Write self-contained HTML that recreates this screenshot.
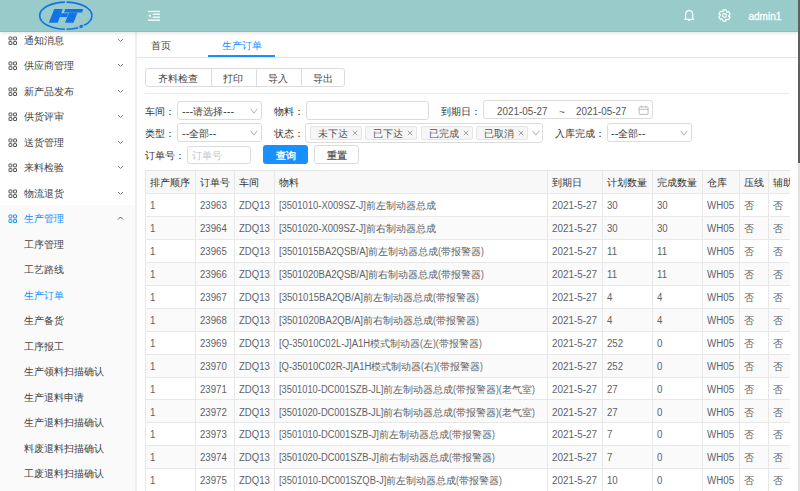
<!DOCTYPE html>
<html><head><meta charset="utf-8"><style>
html,body{margin:0;padding:0;}
body{width:800px;height:491px;overflow:hidden;position:relative;background:#fff;font-family:"Liberation Sans",sans-serif;font-size:10px;}
.b{position:absolute;}
.t{position:absolute;white-space:nowrap;line-height:20px;height:20px;font-size:10px;}
.s{display:inline-block;transform-origin:0 50%}
</style></head><body>
<div class="b" style="left:0px;top:0px;width:798px;height:32px;background:rgb(152,203,202);box-shadow:0 1px 4px rgba(90,60,90,.16);z-index:5"></div>
<div class="b" style="left:0px;top:31px;width:798px;height:1px;background:rgb(138,192,191);z-index:5"></div>
<svg class="b" style="left:0;top:0;z-index:6" width="140" height="32" viewBox="0 0 140 32">
<ellipse cx="65.8" cy="15.7" rx="26.1" ry="13.6" fill="none" stroke="#1173e6" stroke-width="1.6"/>
<g fill="rgb(152,203,202)">
<rect x="64.9" y="0" width="1.6" height="4"/>
<rect x="64.9" y="27.5" width="1.6" height="4"/>
<circle cx="78.9" cy="27.6" r="1"/>
<circle cx="83.5" cy="25.8" r="1"/>
</g>
<circle cx="81.2" cy="26.4" r="1.6" fill="#1173e6"/>
<g fill="#1173e6">
<polygon points="54.25,9 62.75,9 57.75,22.75 48.75,22.75"/>
<polygon points="61.1,13.3 68.3,13.3 67,16.9 59.8,16.9"/>
<polygon points="65.25,9 83.25,9 82,12.5 64,12.5"/>
<polygon points="69,12.5 77.5,12.5 73.5,22.75 65,22.75"/>
</g>
</svg>
<svg class="b" style="left:146px;top:8px;z-index:6" width="16" height="16" viewBox="0 0 16 16">
<g fill="#fff">
<rect x="2" y="2.8" width="12" height="1.3"/>
<rect x="6.6" y="5.6" width="7.4" height="1.2"/>
<rect x="6.6" y="8.6" width="7.4" height="1.2"/>
<rect x="2" y="11.5" width="12" height="1.3"/>
<polygon points="2.4,7.8 4.7,6 4.7,9.6"/>
</g></svg>
<svg class="b" style="left:683px;top:8px;z-index:6" width="13" height="15" viewBox="0 0 13 15">
<path d="M1.7 11.4 L2.7 10.4 V6.2 C2.7 4 4.2 2.7 6.2 2.7 C8.2 2.7 9.7 4 9.7 6.2 V10.4 L10.7 11.4 Z" fill="none" stroke="#fff" stroke-width="1.15" stroke-linejoin="round"/>
<path d="M6.2 1.6 V2.8" stroke="#fff" stroke-width="1.1"/>
<path d="M4.9 12.1 A1.35 1.35 0 0 0 7.5 12.1 Z" fill="#fff"/>
</svg>
<svg class="b" style="left:718.2px;top:8.9px;z-index:6" width="13" height="13" viewBox="0 0 13 13">
<polygon points="4.90,0.92 8.10,0.92 8.65,2.78 9.49,3.41 10.53,2.33 12.13,5.10 10.80,6.50 10.67,7.54 12.13,7.90 10.53,10.67 8.65,10.22 7.69,10.63 8.10,12.08 4.90,12.08 4.35,10.22 3.51,9.59 2.47,10.67 0.87,7.90 2.20,6.50 2.33,5.46 0.87,5.10 2.47,2.33 4.35,2.78 5.31,2.37" fill="none" stroke="#fff" stroke-width="1.1" stroke-linejoin="round"/>
<circle cx="6.5" cy="6.5" r="1.9" fill="none" stroke="#fff" stroke-width="1.1"/>
</svg>
<div class="t" style="left:748.5px;top:7.1px;color:#fff;z-index:6;-webkit-text-stroke:0.3px #fff;">admin1</div>
<div class="b" style="left:798px;top:0px;width:2px;height:163px;background:#5f5f5f;z-index:7"></div>
<div class="b" style="left:798px;top:163px;width:2px;height:328px;background:#e2e2e2;z-index:7"></div>
<div class="b" style="left:0px;top:32px;width:135px;height:459px;background:#fff"></div>
<div class="b" style="left:0px;top:205px;width:135px;height:286px;background:#fafafa"></div>
<div class="b" style="left:135px;top:32px;width:2px;height:459px;background:#f1ecf1"></div>
<svg class="b" style="left:8px;top:35.6px" width="10" height="10" viewBox="0 0 10 10">
<g fill="none" stroke="#555" stroke-width="1">
<rect x="1.0" y="1.0" width="2.9" height="2.9" rx="0.3"/>
<rect x="5.6" y="1.0" width="2.9" height="2.9" rx="0.3"/>
<rect x="1.0" y="5.6" width="2.9" height="2.9" rx="0.3"/>
<rect x="5.6" y="5.6" width="2.9" height="2.9" rx="0.3"/>
</g></svg>
<div class="t" style="left:23.5px;top:30.80px;color:#444;font-size:10px;">通知消息</div>
<svg class="b" style="left:117px;top:37.65px" width="7" height="4.5" viewBox="0 0 7 4.5">
<path d="M1 1 L3.5 3.5 L6 1" fill="none" stroke="#888" stroke-width="1"/></svg>
<svg class="b" style="left:8px;top:61.10000000000001px" width="10" height="10" viewBox="0 0 10 10">
<g fill="none" stroke="#555" stroke-width="1">
<rect x="1.0" y="1.0" width="2.9" height="2.9" rx="0.3"/>
<rect x="5.6" y="1.0" width="2.9" height="2.9" rx="0.3"/>
<rect x="1.0" y="5.6" width="2.9" height="2.9" rx="0.3"/>
<rect x="5.6" y="5.6" width="2.9" height="2.9" rx="0.3"/>
</g></svg>
<div class="t" style="left:23.5px;top:56.30px;color:#444;font-size:10px;">供应商管理</div>
<svg class="b" style="left:117px;top:63.150000000000006px" width="7" height="4.5" viewBox="0 0 7 4.5">
<path d="M1 1 L3.5 3.5 L6 1" fill="none" stroke="#888" stroke-width="1"/></svg>
<svg class="b" style="left:8px;top:86.60000000000001px" width="10" height="10" viewBox="0 0 10 10">
<g fill="none" stroke="#555" stroke-width="1">
<rect x="1.0" y="1.0" width="2.9" height="2.9" rx="0.3"/>
<rect x="5.6" y="1.0" width="2.9" height="2.9" rx="0.3"/>
<rect x="1.0" y="5.6" width="2.9" height="2.9" rx="0.3"/>
<rect x="5.6" y="5.6" width="2.9" height="2.9" rx="0.3"/>
</g></svg>
<div class="t" style="left:23.5px;top:81.80px;color:#444;font-size:10px;">新产品发布</div>
<svg class="b" style="left:117px;top:88.65px" width="7" height="4.5" viewBox="0 0 7 4.5">
<path d="M1 1 L3.5 3.5 L6 1" fill="none" stroke="#888" stroke-width="1"/></svg>
<svg class="b" style="left:8px;top:112.10000000000001px" width="10" height="10" viewBox="0 0 10 10">
<g fill="none" stroke="#555" stroke-width="1">
<rect x="1.0" y="1.0" width="2.9" height="2.9" rx="0.3"/>
<rect x="5.6" y="1.0" width="2.9" height="2.9" rx="0.3"/>
<rect x="1.0" y="5.6" width="2.9" height="2.9" rx="0.3"/>
<rect x="5.6" y="5.6" width="2.9" height="2.9" rx="0.3"/>
</g></svg>
<div class="t" style="left:23.5px;top:107.30px;color:#444;font-size:10px;">供货评审</div>
<svg class="b" style="left:117px;top:114.15px" width="7" height="4.5" viewBox="0 0 7 4.5">
<path d="M1 1 L3.5 3.5 L6 1" fill="none" stroke="#888" stroke-width="1"/></svg>
<svg class="b" style="left:8px;top:137.6px" width="10" height="10" viewBox="0 0 10 10">
<g fill="none" stroke="#555" stroke-width="1">
<rect x="1.0" y="1.0" width="2.9" height="2.9" rx="0.3"/>
<rect x="5.6" y="1.0" width="2.9" height="2.9" rx="0.3"/>
<rect x="1.0" y="5.6" width="2.9" height="2.9" rx="0.3"/>
<rect x="5.6" y="5.6" width="2.9" height="2.9" rx="0.3"/>
</g></svg>
<div class="t" style="left:23.5px;top:132.80px;color:#444;font-size:10px;">送货管理</div>
<svg class="b" style="left:117px;top:139.65px" width="7" height="4.5" viewBox="0 0 7 4.5">
<path d="M1 1 L3.5 3.5 L6 1" fill="none" stroke="#888" stroke-width="1"/></svg>
<svg class="b" style="left:8px;top:163.1px" width="10" height="10" viewBox="0 0 10 10">
<g fill="none" stroke="#555" stroke-width="1">
<rect x="1.0" y="1.0" width="2.9" height="2.9" rx="0.3"/>
<rect x="5.6" y="1.0" width="2.9" height="2.9" rx="0.3"/>
<rect x="1.0" y="5.6" width="2.9" height="2.9" rx="0.3"/>
<rect x="5.6" y="5.6" width="2.9" height="2.9" rx="0.3"/>
</g></svg>
<div class="t" style="left:23.5px;top:158.30px;color:#444;font-size:10px;">来料检验</div>
<svg class="b" style="left:117px;top:165.15px" width="7" height="4.5" viewBox="0 0 7 4.5">
<path d="M1 1 L3.5 3.5 L6 1" fill="none" stroke="#888" stroke-width="1"/></svg>
<svg class="b" style="left:8px;top:188.6px" width="10" height="10" viewBox="0 0 10 10">
<g fill="none" stroke="#555" stroke-width="1">
<rect x="1.0" y="1.0" width="2.9" height="2.9" rx="0.3"/>
<rect x="5.6" y="1.0" width="2.9" height="2.9" rx="0.3"/>
<rect x="1.0" y="5.6" width="2.9" height="2.9" rx="0.3"/>
<rect x="5.6" y="5.6" width="2.9" height="2.9" rx="0.3"/>
</g></svg>
<div class="t" style="left:23.5px;top:183.80px;color:#444;font-size:10px;">物流退货</div>
<svg class="b" style="left:117px;top:190.65px" width="7" height="4.5" viewBox="0 0 7 4.5">
<path d="M1 1 L3.5 3.5 L6 1" fill="none" stroke="#888" stroke-width="1"/></svg>
<svg class="b" style="left:8px;top:214.1px" width="10" height="10" viewBox="0 0 10 10">
<g fill="none" stroke="#1890ff" stroke-width="1">
<rect x="1.0" y="1.0" width="2.9" height="2.9" rx="0.3"/>
<rect x="5.6" y="1.0" width="2.9" height="2.9" rx="0.3"/>
<rect x="1.0" y="5.6" width="2.9" height="2.9" rx="0.3"/>
<rect x="5.6" y="5.6" width="2.9" height="2.9" rx="0.3"/>
</g></svg>
<div class="t" style="left:23.5px;top:209.30px;color:#1890ff;font-size:10px;">生产管理</div>
<svg class="b" style="left:117px;top:216.15px" width="7" height="4.5" viewBox="0 0 7 4.5">
<path d="M1 3.5 L3.5 1 L6 3.5" fill="none" stroke="#555" stroke-width="1"/></svg>
<div class="t" style="left:23.5px;top:234.80px;color:#444;font-size:10px;">工序管理</div>
<div class="t" style="left:23.5px;top:260.30px;color:#444;font-size:10px;">工艺路线</div>
<div class="t" style="left:23.5px;top:285.80px;color:#1890ff;font-size:10px;">生产订单</div>
<div class="t" style="left:23.5px;top:311.30px;color:#444;font-size:10px;">生产备货</div>
<div class="t" style="left:23.5px;top:336.80px;color:#444;font-size:10px;">工序报工</div>
<div class="t" style="left:23.5px;top:362.30px;color:#444;font-size:10px;">生产领料扫描确认</div>
<div class="t" style="left:23.5px;top:387.80px;color:#444;font-size:10px;">生产退料申请</div>
<div class="t" style="left:23.5px;top:413.30px;color:#444;font-size:10px;">生产退料扫描确认</div>
<div class="t" style="left:23.5px;top:438.80px;color:#444;font-size:10px;">料废退料扫描确认</div>
<div class="t" style="left:23.5px;top:464.30px;color:#444;font-size:10px;">工废退料扫描确认</div>
<div class="b" style="left:136px;top:57px;width:662px;height:1px;background:#e4e4e4"></div>
<div class="t" style="left:151px;top:35.50px;color:#444;font-size:10px;">首页</div>
<div class="t" style="left:221.5px;top:35.50px;color:#1890ff;font-size:10px;">生产订单</div>
<div class="b" style="left:207.6px;top:55px;width:67.4px;height:2px;background:#1890ff"></div>
<div class="b" style="left:145px;top:68px;width:200px;height:19.4px;border:1px solid #dcdcdc;border-radius:3px;box-sizing:border-box;background:#fff"></div>
<div class="b" style="left:210.5px;top:68px;width:1px;height:19.4px;background:#dcdcdc"></div>
<div class="b" style="left:255.5px;top:68px;width:1px;height:19.4px;background:#dcdcdc"></div>
<div class="b" style="left:300.5px;top:68px;width:1px;height:19.4px;background:#dcdcdc"></div>
<div class="t" style="left:145.5px;width:65.0px;text-align:center;top:68.50px;color:#444;font-size:10px;">齐料检查</div>
<div class="t" style="left:210.5px;width:45.0px;text-align:center;top:68.50px;color:#444;font-size:10px;">打印</div>
<div class="t" style="left:255.5px;width:45.0px;text-align:center;top:68.50px;color:#444;font-size:10px;">导入</div>
<div class="t" style="left:300.5px;width:44.5px;text-align:center;top:68.50px;color:#444;font-size:10px;">导出</div>
<div class="b" style="left:145px;top:93px;width:644px;height:1px;background:#ebebeb"></div>
<div class="t" style="left:145px;top:101.90px;color:#333;font-size:10px;">车间：</div>
<div class="b" style="left:177px;top:101.2px;width:84.5px;height:19.2px;border:1px solid #dcdcdc;border-radius:3px;box-sizing:border-box;background:#fff"></div>
<div class="t" style="left:182px;top:101.90px;color:#444;font-size:10px;"><span class="s" style="transform:scaleX(1.113);margin-right:1.12px">---</span>请选择<span class="s" style="transform:scaleX(1.113);margin-right:1.12px">---</span></div>
<svg class="b" style="left:249.5px;top:107.8px" width="8" height="6" viewBox="0 0 8 6">
<path d="M0.6 0.8 L3.9 5.2 L7.2 0.8" fill="none" stroke="#aeaeae" stroke-width="0.95"/></svg>
<div class="t" style="left:273.5px;top:101.90px;color:#333;font-size:10px;">物料：</div>
<div class="b" style="left:305.5px;top:101.2px;width:123.5px;height:19.2px;border:1px solid #dcdcdc;border-radius:3px;box-sizing:border-box;background:#fff"></div>
<div class="t" style="left:440.7px;top:101.90px;color:#333;font-size:10px;">到期日：</div>
<div class="b" style="left:482.5px;top:100.3px;width:170px;height:19.2px;border:1px solid #dcdcdc;border-radius:3px;box-sizing:border-box;background:#fff"></div>
<div class="t" style="left:497px;top:101.90px;color:#555;font-size:10px;"><span class="s" style="transform:scaleX(0.985);margin-right:-0.79px">2021-05-27</span></div>
<div class="t" style="left:559.3px;top:103.10px;color:#666;font-size:10px;"><span class="s" style="transform:scaleX(1.025);margin-right:0.15px">~</span></div>
<div class="t" style="left:575.6px;top:101.90px;color:#555;font-size:10px;"><span class="s" style="transform:scaleX(0.985);margin-right:-0.79px">2021-05-27</span></div>
<svg class="b" style="left:637.5px;top:105px" width="11" height="11" viewBox="0 0 11 11">
<g fill="none" stroke="#b4b4b4" stroke-width="0.9">
<rect x="1.1" y="1.8" width="9" height="7.6" rx="0.8"/>
<path d="M1.1 4.3 H10.1 M3.4 0.7 V2.6 M7.8 0.7 V2.6"/>
</g></svg>
<div class="t" style="left:145px;top:124.00px;color:#333;font-size:10px;">类型：</div>
<div class="b" style="left:177px;top:123.1px;width:84.5px;height:18.9px;border:1px solid #dcdcdc;border-radius:3px;box-sizing:border-box;background:#fff"></div>
<div class="t" style="left:182px;top:124.00px;color:#444;font-size:10px;"><span class="s" style="transform:scaleX(1.113);margin-right:0.75px">--</span>全部<span class="s" style="transform:scaleX(1.113);margin-right:0.75px">--</span></div>
<svg class="b" style="left:249.5px;top:129.9px" width="8" height="6" viewBox="0 0 8 6">
<path d="M0.6 0.8 L3.9 5.2 L7.2 0.8" fill="none" stroke="#aeaeae" stroke-width="0.95"/></svg>
<div class="t" style="left:273.5px;top:124.00px;color:#333;font-size:10px;">状态：</div>
<div class="b" style="left:305.3px;top:123.2px;width:238.2px;height:19.9px;border:1px solid #dcdcdc;border-radius:3px;box-sizing:border-box;background:#fff"></div>
<div class="b" style="left:309.8px;top:125.5px;width:52.2px;height:14.2px;background:#f6f6f6;border:1px solid #e6e6e6;border-radius:2px;box-sizing:border-box"></div>
<div class="t" style="left:317.8px;top:124.00px;color:#555;font-size:10px;">未下达</div>
<svg class="b" style="left:351.8px;top:129.6px" width="6" height="6" viewBox="0 0 6 6">
<path d="M0.7 0.7 L5.3 5.3 M5.3 0.7 L0.7 5.3" stroke="#8f8f8f" stroke-width="0.8"/></svg>
<div class="b" style="left:365.3px;top:125.5px;width:52.2px;height:14.2px;background:#f6f6f6;border:1px solid #e6e6e6;border-radius:2px;box-sizing:border-box"></div>
<div class="t" style="left:373.3px;top:124.00px;color:#555;font-size:10px;">已下达</div>
<svg class="b" style="left:407.3px;top:129.6px" width="6" height="6" viewBox="0 0 6 6">
<path d="M0.7 0.7 L5.3 5.3 M5.3 0.7 L0.7 5.3" stroke="#8f8f8f" stroke-width="0.8"/></svg>
<div class="b" style="left:421px;top:125.5px;width:52px;height:14.2px;background:#f6f6f6;border:1px solid #e6e6e6;border-radius:2px;box-sizing:border-box"></div>
<div class="t" style="left:429px;top:124.00px;color:#555;font-size:10px;">已完成</div>
<svg class="b" style="left:462.8px;top:129.6px" width="6" height="6" viewBox="0 0 6 6">
<path d="M0.7 0.7 L5.3 5.3 M5.3 0.7 L0.7 5.3" stroke="#8f8f8f" stroke-width="0.8"/></svg>
<div class="b" style="left:476.4px;top:125.5px;width:51.7px;height:14.2px;background:#f6f6f6;border:1px solid #e6e6e6;border-radius:2px;box-sizing:border-box"></div>
<div class="t" style="left:484.4px;top:124.00px;color:#555;font-size:10px;">已取消</div>
<svg class="b" style="left:517.9px;top:129.6px" width="6" height="6" viewBox="0 0 6 6">
<path d="M0.7 0.7 L5.3 5.3 M5.3 0.7 L0.7 5.3" stroke="#8f8f8f" stroke-width="0.8"/></svg>
<svg class="b" style="left:532px;top:129.9px" width="8" height="6" viewBox="0 0 8 6">
<path d="M0.6 0.8 L3.9 5.2 L7.2 0.8" fill="none" stroke="#aeaeae" stroke-width="0.95"/></svg>
<div class="t" style="left:555px;top:124.00px;color:#333;font-size:10px;">入库完成：</div>
<div class="b" style="left:606.6px;top:123.4px;width:85px;height:19px;border:1px solid #dcdcdc;border-radius:3px;box-sizing:border-box;background:#fff"></div>
<div class="t" style="left:611px;top:124.00px;color:#444;font-size:10px;"><span class="s" style="transform:scaleX(1.113);margin-right:0.75px">--</span>全部<span class="s" style="transform:scaleX(1.113);margin-right:0.75px">--</span></div>
<svg class="b" style="left:679.5px;top:129.9px" width="8" height="6" viewBox="0 0 8 6">
<path d="M0.6 0.8 L3.9 5.2 L7.2 0.8" fill="none" stroke="#aeaeae" stroke-width="0.95"/></svg>
<div class="t" style="left:145px;top:145.90px;color:#333;font-size:10px;">订单号：</div>
<div class="b" style="left:187.4px;top:145.6px;width:63.8px;height:18.8px;border:1px solid #dcdcdc;border-radius:3px;box-sizing:border-box;background:#fff"></div>
<div class="t" style="left:191.5px;top:145.90px;color:#c0c4cc;font-size:10px;">订单号</div>
<div class="b" style="left:263px;top:145.3px;width:45px;height:19.2px;background:#1890ff;border-radius:3px"></div>
<div class="t" style="left:263.0px;width:45px;text-align:center;top:145.90px;color:#fff;font-size:10px;font-weight:bold;">查询</div>
<div class="b" style="left:314.3px;top:145.3px;width:45px;height:19.2px;border:1px solid #dcdcdc;border-radius:3px;box-sizing:border-box;background:#fff"></div>
<div class="t" style="left:314.3px;width:45px;text-align:center;top:145.90px;color:#444;font-size:10px;-webkit-text-stroke:0.2px #444;">重置</div>
<div class="b" style="left:145px;top:170px;width:644.5px;height:321px;overflow:hidden">
<div class="b" style="left:0.00px;top:0.00px;width:700.00px;height:23.10px;background:#f8f8f9"></div>
<div class="b" style="left:0.00px;top:46.03px;width:700.00px;height:22.93px;background:#fafafa"></div>
<div class="b" style="left:0.00px;top:91.89px;width:700.00px;height:22.93px;background:#fafafa"></div>
<div class="b" style="left:0.00px;top:137.75px;width:700.00px;height:22.93px;background:#fafafa"></div>
<div class="b" style="left:0.00px;top:183.61px;width:700.00px;height:22.93px;background:#fafafa"></div>
<div class="b" style="left:0.00px;top:229.47px;width:700.00px;height:22.93px;background:#fafafa"></div>
<div class="b" style="left:0.00px;top:275.33px;width:700.00px;height:22.93px;background:#fafafa"></div>
<div class="b" style="left:0.00px;top:0.00px;width:700.00px;height:1.00px;background:#e8e8e8"></div>
<div class="b" style="left:0.00px;top:23.00px;width:700.00px;height:1.00px;background:#e8e8e8"></div>
<div class="b" style="left:0.00px;top:46.00px;width:700.00px;height:1.00px;background:#e8e8e8"></div>
<div class="b" style="left:0.00px;top:69.00px;width:700.00px;height:1.00px;background:#e8e8e8"></div>
<div class="b" style="left:0.00px;top:92.00px;width:700.00px;height:1.00px;background:#e8e8e8"></div>
<div class="b" style="left:0.00px;top:115.00px;width:700.00px;height:1.00px;background:#e8e8e8"></div>
<div class="b" style="left:0.00px;top:138.00px;width:700.00px;height:1.00px;background:#e8e8e8"></div>
<div class="b" style="left:0.00px;top:161.00px;width:700.00px;height:1.00px;background:#e8e8e8"></div>
<div class="b" style="left:0.00px;top:184.00px;width:700.00px;height:1.00px;background:#e8e8e8"></div>
<div class="b" style="left:0.00px;top:207.00px;width:700.00px;height:1.00px;background:#e8e8e8"></div>
<div class="b" style="left:0.00px;top:229.00px;width:700.00px;height:1.00px;background:#e8e8e8"></div>
<div class="b" style="left:0.00px;top:252.00px;width:700.00px;height:1.00px;background:#e8e8e8"></div>
<div class="b" style="left:0.00px;top:275.00px;width:700.00px;height:1.00px;background:#e8e8e8"></div>
<div class="b" style="left:0.00px;top:298.00px;width:700.00px;height:1.00px;background:#e8e8e8"></div>
<div class="b" style="left:0.00px;top:321.00px;width:700.00px;height:1.00px;background:#e8e8e8"></div>
<div class="b" style="left:0.00px;top:0.00px;width:1.00px;height:400.00px;background:#e8e8e8"></div>
<div class="b" style="left:50.00px;top:0.00px;width:1.00px;height:400.00px;background:#e8e8e8"></div>
<div class="b" style="left:89.00px;top:0.00px;width:1.00px;height:400.00px;background:#e8e8e8"></div>
<div class="b" style="left:129.00px;top:0.00px;width:1.00px;height:400.00px;background:#e8e8e8"></div>
<div class="b" style="left:402.00px;top:0.00px;width:1.00px;height:400.00px;background:#e8e8e8"></div>
<div class="b" style="left:457.00px;top:0.00px;width:1.00px;height:400.00px;background:#e8e8e8"></div>
<div class="b" style="left:507.00px;top:0.00px;width:1.00px;height:400.00px;background:#e8e8e8"></div>
<div class="b" style="left:557.00px;top:0.00px;width:1.00px;height:400.00px;background:#e8e8e8"></div>
<div class="b" style="left:594.00px;top:0.00px;width:1.00px;height:400.00px;background:#e8e8e8"></div>
<div class="b" style="left:623.00px;top:0.00px;width:1.00px;height:400.00px;background:#e8e8e8"></div>
<div class="t" style="left:4.90px;top:2.70px;color:#333">排产顺序</div>
<div class="t" style="left:54.90px;top:2.70px;color:#333">订单号</div>
<div class="t" style="left:93.90px;top:2.70px;color:#333">车间</div>
<div class="t" style="left:133.90px;top:2.70px;color:#333">物料</div>
<div class="t" style="left:406.90px;top:2.70px;color:#333">到期日</div>
<div class="t" style="left:461.90px;top:2.70px;color:#333">计划数量</div>
<div class="t" style="left:511.90px;top:2.70px;color:#333">完成数量</div>
<div class="t" style="left:561.90px;top:2.70px;color:#333">仓库</div>
<div class="t" style="left:598.90px;top:2.70px;color:#333">压线</div>
<div class="t" style="left:627.90px;top:2.70px;color:#333">辅助</div>
<div class="t" style="left:4.90px;top:26.16px;color:#606266"><span class="s" style="transform:scaleX(0.965);margin-right:-0.19px">1</span></div>
<div class="t" style="left:54.90px;top:26.16px;color:#606266"><span class="s" style="transform:scaleX(0.965);margin-right:-0.96px">23963</span></div>
<div class="t" style="left:93.90px;top:26.16px;color:#606266"><span class="s" style="transform:scaleX(0.957);margin-right:-1.37px">ZDQ13</span></div>
<div class="t" style="left:133.90px;top:26.16px;color:#606266"><span class="s" style="transform:scaleX(0.942);margin-right:-5.36px">[3501010-X009SZ-J]</span>前左制动器总成</div>
<div class="t" style="left:406.90px;top:26.16px;color:#606266"><span class="s" style="transform:scaleX(0.987);margin-right:-0.60px">2021-5-27</span></div>
<div class="t" style="left:461.90px;top:26.16px;color:#606266"><span class="s" style="transform:scaleX(0.965);margin-right:-0.38px">30</span></div>
<div class="t" style="left:511.90px;top:26.16px;color:#606266"><span class="s" style="transform:scaleX(0.965);margin-right:-0.38px">30</span></div>
<div class="t" style="left:561.90px;top:26.16px;color:#606266"><span class="s" style="transform:scaleX(0.974);margin-right:-0.73px">WH05</span></div>
<div class="t" style="left:598.90px;top:26.16px;color:#606266">否</div>
<div class="t" style="left:627.90px;top:26.16px;color:#606266">否</div>
<div class="t" style="left:4.90px;top:49.09px;color:#606266"><span class="s" style="transform:scaleX(0.965);margin-right:-0.19px">1</span></div>
<div class="t" style="left:54.90px;top:49.09px;color:#606266"><span class="s" style="transform:scaleX(0.965);margin-right:-0.96px">23964</span></div>
<div class="t" style="left:93.90px;top:49.09px;color:#606266"><span class="s" style="transform:scaleX(0.957);margin-right:-1.37px">ZDQ13</span></div>
<div class="t" style="left:133.90px;top:49.09px;color:#606266"><span class="s" style="transform:scaleX(0.942);margin-right:-5.36px">[3501020-X009SZ-J]</span>前右制动器总成</div>
<div class="t" style="left:406.90px;top:49.09px;color:#606266"><span class="s" style="transform:scaleX(0.987);margin-right:-0.60px">2021-5-27</span></div>
<div class="t" style="left:461.90px;top:49.09px;color:#606266"><span class="s" style="transform:scaleX(0.965);margin-right:-0.38px">30</span></div>
<div class="t" style="left:511.90px;top:49.09px;color:#606266"><span class="s" style="transform:scaleX(0.965);margin-right:-0.38px">30</span></div>
<div class="t" style="left:561.90px;top:49.09px;color:#606266"><span class="s" style="transform:scaleX(0.974);margin-right:-0.73px">WH05</span></div>
<div class="t" style="left:598.90px;top:49.09px;color:#606266">否</div>
<div class="t" style="left:627.90px;top:49.09px;color:#606266">否</div>
<div class="t" style="left:4.90px;top:72.02px;color:#606266"><span class="s" style="transform:scaleX(0.965);margin-right:-0.19px">1</span></div>
<div class="t" style="left:54.90px;top:72.02px;color:#606266"><span class="s" style="transform:scaleX(0.965);margin-right:-0.96px">23965</span></div>
<div class="t" style="left:93.90px;top:72.02px;color:#606266"><span class="s" style="transform:scaleX(0.957);margin-right:-1.37px">ZDQ13</span></div>
<div class="t" style="left:133.90px;top:72.02px;color:#606266"><span class="s" style="transform:scaleX(0.949);margin-right:-4.77px">[3501015BA2QSB/A]</span>前左制动器总成<span class="s" style="transform:scaleX(0.856);margin-right:-0.48px">(</span>带报警器<span class="s" style="transform:scaleX(0.856);margin-right:-0.48px">)</span></div>
<div class="t" style="left:406.90px;top:72.02px;color:#606266"><span class="s" style="transform:scaleX(0.987);margin-right:-0.60px">2021-5-27</span></div>
<div class="t" style="left:461.90px;top:72.02px;color:#606266"><span class="s" style="transform:scaleX(0.965);margin-right:-0.38px">11</span></div>
<div class="t" style="left:511.90px;top:72.02px;color:#606266"><span class="s" style="transform:scaleX(0.965);margin-right:-0.38px">11</span></div>
<div class="t" style="left:561.90px;top:72.02px;color:#606266"><span class="s" style="transform:scaleX(0.974);margin-right:-0.73px">WH05</span></div>
<div class="t" style="left:598.90px;top:72.02px;color:#606266">否</div>
<div class="t" style="left:627.90px;top:72.02px;color:#606266">否</div>
<div class="t" style="left:4.90px;top:94.95px;color:#606266"><span class="s" style="transform:scaleX(0.965);margin-right:-0.19px">1</span></div>
<div class="t" style="left:54.90px;top:94.95px;color:#606266"><span class="s" style="transform:scaleX(0.965);margin-right:-0.96px">23966</span></div>
<div class="t" style="left:93.90px;top:94.95px;color:#606266"><span class="s" style="transform:scaleX(0.957);margin-right:-1.37px">ZDQ13</span></div>
<div class="t" style="left:133.90px;top:94.95px;color:#606266"><span class="s" style="transform:scaleX(0.949);margin-right:-4.77px">[3501020BA2QSB/A]</span>前右制动器总成<span class="s" style="transform:scaleX(0.856);margin-right:-0.48px">(</span>带报警器<span class="s" style="transform:scaleX(0.856);margin-right:-0.48px">)</span></div>
<div class="t" style="left:406.90px;top:94.95px;color:#606266"><span class="s" style="transform:scaleX(0.987);margin-right:-0.60px">2021-5-27</span></div>
<div class="t" style="left:461.90px;top:94.95px;color:#606266"><span class="s" style="transform:scaleX(0.965);margin-right:-0.38px">11</span></div>
<div class="t" style="left:511.90px;top:94.95px;color:#606266"><span class="s" style="transform:scaleX(0.965);margin-right:-0.38px">11</span></div>
<div class="t" style="left:561.90px;top:94.95px;color:#606266"><span class="s" style="transform:scaleX(0.974);margin-right:-0.73px">WH05</span></div>
<div class="t" style="left:598.90px;top:94.95px;color:#606266">否</div>
<div class="t" style="left:627.90px;top:94.95px;color:#606266">否</div>
<div class="t" style="left:4.90px;top:117.88px;color:#606266"><span class="s" style="transform:scaleX(0.965);margin-right:-0.19px">1</span></div>
<div class="t" style="left:54.90px;top:117.88px;color:#606266"><span class="s" style="transform:scaleX(0.965);margin-right:-0.96px">23967</span></div>
<div class="t" style="left:93.90px;top:117.88px;color:#606266"><span class="s" style="transform:scaleX(0.957);margin-right:-1.37px">ZDQ13</span></div>
<div class="t" style="left:133.90px;top:117.88px;color:#606266"><span class="s" style="transform:scaleX(0.962);margin-right:-3.32px">[3501015BA2QB/A]</span>前左制动器总成<span class="s" style="transform:scaleX(0.856);margin-right:-0.48px">(</span>带报警器<span class="s" style="transform:scaleX(0.856);margin-right:-0.48px">)</span></div>
<div class="t" style="left:406.90px;top:117.88px;color:#606266"><span class="s" style="transform:scaleX(0.987);margin-right:-0.60px">2021-5-27</span></div>
<div class="t" style="left:461.90px;top:117.88px;color:#606266"><span class="s" style="transform:scaleX(0.965);margin-right:-0.19px">4</span></div>
<div class="t" style="left:511.90px;top:117.88px;color:#606266"><span class="s" style="transform:scaleX(0.965);margin-right:-0.19px">4</span></div>
<div class="t" style="left:561.90px;top:117.88px;color:#606266"><span class="s" style="transform:scaleX(0.974);margin-right:-0.73px">WH05</span></div>
<div class="t" style="left:598.90px;top:117.88px;color:#606266">否</div>
<div class="t" style="left:627.90px;top:117.88px;color:#606266">否</div>
<div class="t" style="left:4.90px;top:140.81px;color:#606266"><span class="s" style="transform:scaleX(0.965);margin-right:-0.19px">1</span></div>
<div class="t" style="left:54.90px;top:140.81px;color:#606266"><span class="s" style="transform:scaleX(0.965);margin-right:-0.96px">23968</span></div>
<div class="t" style="left:93.90px;top:140.81px;color:#606266"><span class="s" style="transform:scaleX(0.957);margin-right:-1.37px">ZDQ13</span></div>
<div class="t" style="left:133.90px;top:140.81px;color:#606266"><span class="s" style="transform:scaleX(0.962);margin-right:-3.32px">[3501020BA2QB/A]</span>前右制动器总成<span class="s" style="transform:scaleX(0.856);margin-right:-0.48px">(</span>带报警器<span class="s" style="transform:scaleX(0.856);margin-right:-0.48px">)</span></div>
<div class="t" style="left:406.90px;top:140.81px;color:#606266"><span class="s" style="transform:scaleX(0.987);margin-right:-0.60px">2021-5-27</span></div>
<div class="t" style="left:461.90px;top:140.81px;color:#606266"><span class="s" style="transform:scaleX(0.965);margin-right:-0.19px">4</span></div>
<div class="t" style="left:511.90px;top:140.81px;color:#606266"><span class="s" style="transform:scaleX(0.965);margin-right:-0.19px">4</span></div>
<div class="t" style="left:561.90px;top:140.81px;color:#606266"><span class="s" style="transform:scaleX(0.974);margin-right:-0.73px">WH05</span></div>
<div class="t" style="left:598.90px;top:140.81px;color:#606266">否</div>
<div class="t" style="left:627.90px;top:140.81px;color:#606266">否</div>
<div class="t" style="left:4.90px;top:163.74px;color:#606266"><span class="s" style="transform:scaleX(0.965);margin-right:-0.19px">1</span></div>
<div class="t" style="left:54.90px;top:163.74px;color:#606266"><span class="s" style="transform:scaleX(0.965);margin-right:-0.96px">23969</span></div>
<div class="t" style="left:93.90px;top:163.74px;color:#606266"><span class="s" style="transform:scaleX(0.957);margin-right:-1.37px">ZDQ13</span></div>
<div class="t" style="left:133.90px;top:163.74px;color:#606266"><span class="s" style="transform:scaleX(0.948);margin-right:-4.99px">[Q-35010C02L-J]A1H</span>模式制动器<span class="s" style="transform:scaleX(0.856);margin-right:-0.48px">(</span>左<span class="s" style="transform:scaleX(0.856);margin-right:-0.96px">)(</span>带报警器<span class="s" style="transform:scaleX(0.856);margin-right:-0.48px">)</span></div>
<div class="t" style="left:406.90px;top:163.74px;color:#606266"><span class="s" style="transform:scaleX(0.987);margin-right:-0.60px">2021-5-27</span></div>
<div class="t" style="left:461.90px;top:163.74px;color:#606266"><span class="s" style="transform:scaleX(0.965);margin-right:-0.58px">252</span></div>
<div class="t" style="left:511.90px;top:163.74px;color:#606266"><span class="s" style="transform:scaleX(0.965);margin-right:-0.19px">0</span></div>
<div class="t" style="left:561.90px;top:163.74px;color:#606266"><span class="s" style="transform:scaleX(0.974);margin-right:-0.73px">WH05</span></div>
<div class="t" style="left:598.90px;top:163.74px;color:#606266">否</div>
<div class="t" style="left:627.90px;top:163.74px;color:#606266">否</div>
<div class="t" style="left:4.90px;top:186.67px;color:#606266"><span class="s" style="transform:scaleX(0.965);margin-right:-0.19px">1</span></div>
<div class="t" style="left:54.90px;top:186.67px;color:#606266"><span class="s" style="transform:scaleX(0.965);margin-right:-0.96px">23970</span></div>
<div class="t" style="left:93.90px;top:186.67px;color:#606266"><span class="s" style="transform:scaleX(0.957);margin-right:-1.37px">ZDQ13</span></div>
<div class="t" style="left:133.90px;top:186.67px;color:#606266"><span class="s" style="transform:scaleX(0.944);margin-right:-5.44px">[Q-35010C02R-J]A1H</span>模式制动器<span class="s" style="transform:scaleX(0.856);margin-right:-0.48px">(</span>右<span class="s" style="transform:scaleX(0.856);margin-right:-0.96px">)(</span>带报警器<span class="s" style="transform:scaleX(0.856);margin-right:-0.48px">)</span></div>
<div class="t" style="left:406.90px;top:186.67px;color:#606266"><span class="s" style="transform:scaleX(0.987);margin-right:-0.60px">2021-5-27</span></div>
<div class="t" style="left:461.90px;top:186.67px;color:#606266"><span class="s" style="transform:scaleX(0.965);margin-right:-0.58px">252</span></div>
<div class="t" style="left:511.90px;top:186.67px;color:#606266"><span class="s" style="transform:scaleX(0.965);margin-right:-0.19px">0</span></div>
<div class="t" style="left:561.90px;top:186.67px;color:#606266"><span class="s" style="transform:scaleX(0.974);margin-right:-0.73px">WH05</span></div>
<div class="t" style="left:598.90px;top:186.67px;color:#606266">否</div>
<div class="t" style="left:627.90px;top:186.67px;color:#606266">否</div>
<div class="t" style="left:4.90px;top:209.60px;color:#606266"><span class="s" style="transform:scaleX(0.965);margin-right:-0.19px">1</span></div>
<div class="t" style="left:54.90px;top:209.60px;color:#606266"><span class="s" style="transform:scaleX(0.965);margin-right:-0.96px">23971</span></div>
<div class="t" style="left:93.90px;top:209.60px;color:#606266"><span class="s" style="transform:scaleX(0.957);margin-right:-1.37px">ZDQ13</span></div>
<div class="t" style="left:133.90px;top:209.60px;color:#606266"><span class="s" style="transform:scaleX(0.930);margin-right:-7.85px">[3501010-DC001SZB-JL]</span>前左制动器总成<span class="s" style="transform:scaleX(0.856);margin-right:-0.48px">(</span>带报警器<span class="s" style="transform:scaleX(0.856);margin-right:-0.96px">)(</span>老气室<span class="s" style="transform:scaleX(0.856);margin-right:-0.48px">)</span></div>
<div class="t" style="left:406.90px;top:209.60px;color:#606266"><span class="s" style="transform:scaleX(0.987);margin-right:-0.60px">2021-5-27</span></div>
<div class="t" style="left:461.90px;top:209.60px;color:#606266"><span class="s" style="transform:scaleX(0.965);margin-right:-0.38px">27</span></div>
<div class="t" style="left:511.90px;top:209.60px;color:#606266"><span class="s" style="transform:scaleX(0.965);margin-right:-0.19px">0</span></div>
<div class="t" style="left:561.90px;top:209.60px;color:#606266"><span class="s" style="transform:scaleX(0.974);margin-right:-0.73px">WH05</span></div>
<div class="t" style="left:598.90px;top:209.60px;color:#606266">否</div>
<div class="t" style="left:627.90px;top:209.60px;color:#606266">否</div>
<div class="t" style="left:4.90px;top:232.53px;color:#606266"><span class="s" style="transform:scaleX(0.965);margin-right:-0.19px">1</span></div>
<div class="t" style="left:54.90px;top:232.53px;color:#606266"><span class="s" style="transform:scaleX(0.965);margin-right:-0.96px">23972</span></div>
<div class="t" style="left:93.90px;top:232.53px;color:#606266"><span class="s" style="transform:scaleX(0.957);margin-right:-1.37px">ZDQ13</span></div>
<div class="t" style="left:133.90px;top:232.53px;color:#606266"><span class="s" style="transform:scaleX(0.930);margin-right:-7.85px">[3501020-DC001SZB-JL]</span>前右制动器总成<span class="s" style="transform:scaleX(0.856);margin-right:-0.48px">(</span>带报警器<span class="s" style="transform:scaleX(0.856);margin-right:-0.96px">)(</span>老气室<span class="s" style="transform:scaleX(0.856);margin-right:-0.48px">)</span></div>
<div class="t" style="left:406.90px;top:232.53px;color:#606266"><span class="s" style="transform:scaleX(0.987);margin-right:-0.60px">2021-5-27</span></div>
<div class="t" style="left:461.90px;top:232.53px;color:#606266"><span class="s" style="transform:scaleX(0.965);margin-right:-0.38px">27</span></div>
<div class="t" style="left:511.90px;top:232.53px;color:#606266"><span class="s" style="transform:scaleX(0.965);margin-right:-0.19px">0</span></div>
<div class="t" style="left:561.90px;top:232.53px;color:#606266"><span class="s" style="transform:scaleX(0.974);margin-right:-0.73px">WH05</span></div>
<div class="t" style="left:598.90px;top:232.53px;color:#606266">否</div>
<div class="t" style="left:627.90px;top:232.53px;color:#606266">否</div>
<div class="t" style="left:4.90px;top:255.46px;color:#606266"><span class="s" style="transform:scaleX(0.965);margin-right:-0.19px">1</span></div>
<div class="t" style="left:54.90px;top:255.46px;color:#606266"><span class="s" style="transform:scaleX(0.965);margin-right:-0.96px">23973</span></div>
<div class="t" style="left:93.90px;top:255.46px;color:#606266"><span class="s" style="transform:scaleX(0.957);margin-right:-1.37px">ZDQ13</span></div>
<div class="t" style="left:133.90px;top:255.46px;color:#606266"><span class="s" style="transform:scaleX(0.935);margin-right:-6.94px">[3501010-DC001SZB-J]</span>前左制动器总成<span class="s" style="transform:scaleX(0.856);margin-right:-0.48px">(</span>带报警器<span class="s" style="transform:scaleX(0.856);margin-right:-0.48px">)</span></div>
<div class="t" style="left:406.90px;top:255.46px;color:#606266"><span class="s" style="transform:scaleX(0.987);margin-right:-0.60px">2021-5-27</span></div>
<div class="t" style="left:461.90px;top:255.46px;color:#606266"><span class="s" style="transform:scaleX(0.965);margin-right:-0.19px">7</span></div>
<div class="t" style="left:511.90px;top:255.46px;color:#606266"><span class="s" style="transform:scaleX(0.965);margin-right:-0.19px">0</span></div>
<div class="t" style="left:561.90px;top:255.46px;color:#606266"><span class="s" style="transform:scaleX(0.974);margin-right:-0.73px">WH05</span></div>
<div class="t" style="left:598.90px;top:255.46px;color:#606266">否</div>
<div class="t" style="left:627.90px;top:255.46px;color:#606266">否</div>
<div class="t" style="left:4.90px;top:278.39px;color:#606266"><span class="s" style="transform:scaleX(0.965);margin-right:-0.19px">1</span></div>
<div class="t" style="left:54.90px;top:278.39px;color:#606266"><span class="s" style="transform:scaleX(0.965);margin-right:-0.96px">23974</span></div>
<div class="t" style="left:93.90px;top:278.39px;color:#606266"><span class="s" style="transform:scaleX(0.957);margin-right:-1.37px">ZDQ13</span></div>
<div class="t" style="left:133.90px;top:278.39px;color:#606266"><span class="s" style="transform:scaleX(0.935);margin-right:-6.94px">[3501020-DC001SZB-J]</span>前右制动器总成<span class="s" style="transform:scaleX(0.856);margin-right:-0.48px">(</span>带报警器<span class="s" style="transform:scaleX(0.856);margin-right:-0.48px">)</span></div>
<div class="t" style="left:406.90px;top:278.39px;color:#606266"><span class="s" style="transform:scaleX(0.987);margin-right:-0.60px">2021-5-27</span></div>
<div class="t" style="left:461.90px;top:278.39px;color:#606266"><span class="s" style="transform:scaleX(0.965);margin-right:-0.19px">7</span></div>
<div class="t" style="left:511.90px;top:278.39px;color:#606266"><span class="s" style="transform:scaleX(0.965);margin-right:-0.19px">0</span></div>
<div class="t" style="left:561.90px;top:278.39px;color:#606266"><span class="s" style="transform:scaleX(0.974);margin-right:-0.73px">WH05</span></div>
<div class="t" style="left:598.90px;top:278.39px;color:#606266">否</div>
<div class="t" style="left:627.90px;top:278.39px;color:#606266">否</div>
<div class="t" style="left:4.90px;top:301.32px;color:#606266"><span class="s" style="transform:scaleX(0.965);margin-right:-0.19px">1</span></div>
<div class="t" style="left:54.90px;top:301.32px;color:#606266"><span class="s" style="transform:scaleX(0.965);margin-right:-0.96px">23975</span></div>
<div class="t" style="left:93.90px;top:301.32px;color:#606266"><span class="s" style="transform:scaleX(0.957);margin-right:-1.37px">ZDQ13</span></div>
<div class="t" style="left:133.90px;top:301.32px;color:#606266"><span class="s" style="transform:scaleX(0.937);margin-right:-7.23px">[3501010-DC001SZQB-J]</span>前左制动器总成<span class="s" style="transform:scaleX(0.856);margin-right:-0.48px">(</span>带报警器<span class="s" style="transform:scaleX(0.856);margin-right:-0.48px">)</span></div>
<div class="t" style="left:406.90px;top:301.32px;color:#606266"><span class="s" style="transform:scaleX(0.987);margin-right:-0.60px">2021-5-27</span></div>
<div class="t" style="left:461.90px;top:301.32px;color:#606266"><span class="s" style="transform:scaleX(0.965);margin-right:-0.38px">10</span></div>
<div class="t" style="left:511.90px;top:301.32px;color:#606266"><span class="s" style="transform:scaleX(0.965);margin-right:-0.19px">0</span></div>
<div class="t" style="left:561.90px;top:301.32px;color:#606266"><span class="s" style="transform:scaleX(0.974);margin-right:-0.73px">WH05</span></div>
<div class="t" style="left:598.90px;top:301.32px;color:#606266">否</div>
<div class="t" style="left:627.90px;top:301.32px;color:#606266">否</div>
</div>
</body></html>
